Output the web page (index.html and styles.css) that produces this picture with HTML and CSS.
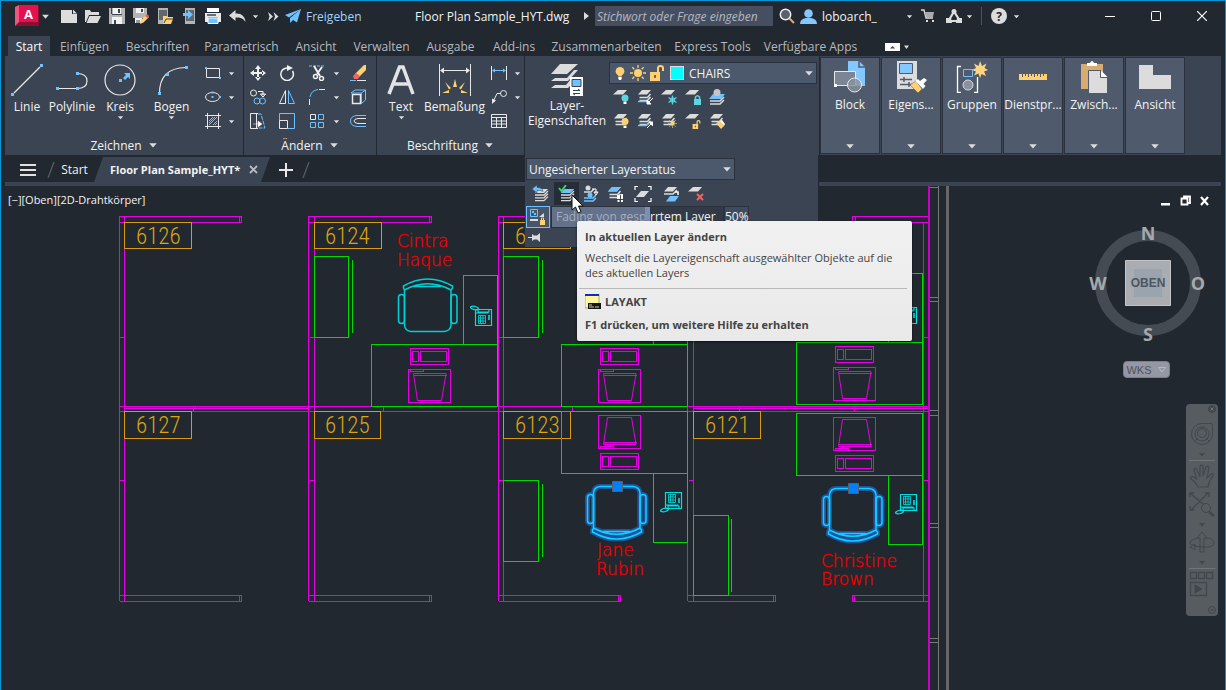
FILE: index.html
```html
<!DOCTYPE html>
<html lang="de">
<head>
<meta charset="utf-8">
<title>Floor Plan Sample_HYT.dwg</title>
<link rel="stylesheet" href="styles.css">
</head>
<body>
<svg class="defs" width="0" height="0" aria-hidden="true">
  <symbol id="down" viewBox="0 0 8 8"><path d="M1 2.500h6l-3 3.500z" fill="#dcdcdc"/></symbol>
  <symbol id="sheets" viewBox="0 0 16 16"><path d="M5 1h9l-4 4.500H1z" fill="#dcdcdc"/><path d="M2.500 8.500h8L13.500 5M2.500 11.500h8L13.500 8" fill="none" stroke="#dcdcdc" stroke-width="1.500"/></symbol>
  <symbol id="sheet" viewBox="0 0 16 16"><path d="M5 1h9l-4 4.500H0z" fill="#dcdcdc"/></symbol>
  <symbol id="stack" viewBox="0 0 16 16"><path d="M6 3h9l-4 4H2z" fill="#dcdcdc"/><path d="M2 9h9l4-4M2 11.800h9l4-4M2 14.600h9l4-4" fill="none" stroke="#dcdcdc" stroke-width="1.300"/></symbol>
  <symbol id="bulb" viewBox="0 0 16 16"><circle cx="8" cy="6" r="5"/><path d="M6 9h4v3H6z"/><path d="M6 12.500h4v2L9 16H7l-1-1.500z" fill="#fff"/></symbol>
  <symbol id="sun" viewBox="0 0 16 16"><circle cx="8" cy="8" r="4" fill="#ffd06f"/><path d="M8 0v3M8 13v3M0 8h3M13 8h3M2.300 2.300l2 2M11.700 11.700l2 2M13.700 2.300l-2 2M4.300 11.700l-2 2" stroke="#ffd06f" stroke-width="1.300"/></symbol>
  <symbol id="unlock" viewBox="0 0 16 16"><path d="M1 7h10v9H1z" fill="#ffd06f"/><path d="M9 8V3q0-2 2.500-2T14 3v3" fill="none" stroke="#ffd06f" stroke-width="2"/><path d="M6 10v3" stroke="#3b4453" stroke-width="1.500"/></symbol>

  <g id="kit" fill="none">
    <g stroke="#00d900" shape-rendering="crispEdges">
      <path d="M371.500 344.500H497.500V406.500H371.500zM463.500 344.500V275.500H497.500V344.500"/>
    </g>
    <g stroke="#e600e6">
      <path shape-rendering="crispEdges" d="M410.500 348.500H448.500V364.500H410.500zM412.500 351.500H418.500V361.500H412.500zM420.500 351.500H446.500V361.500H420.500zM408.500 369.500H450.500V402.500H408.500zM410.500 369.500V371.500H423.500V369.500M413.500 375.500H446.500"/>
      <path d="M413.500 373.500H446L441.500 400.500H417.500z"/>
    </g>
    <g stroke="#00dfe2">
      <path d="M470.500 307q2-1.500 5-.500 3 1 3 2.500-2 1.500-5 .500-3-1-3-2.500z" stroke-width="1.300"/>
      <path d="M475.500 309.500h16v16h-16zM475.500 313h13M478 309v3h11v-3" stroke-width="1.200"/>
      <path d="M478.500 315.500h7v8h-7zM480.500 315.500v8M483 315.500v8M478.500 318h7M478.500 321h7" stroke-width=".8"/>
      <path d="M489 315v5" stroke-width="1.600"/>
    </g>
  </g>
  <g id="chair" fill="none">
    <path d="M404.500 290V325Q405 331 411 331.500H444Q450.500 331 451 325V290M404.500 290L403.500 288V286Q427.500 272 452.500 286V288L451 290M404.500 290Q427.500 277.500 451 290M414 286.500H441"/>
    <rect x="398.500" y="294.500" width="6" height="29" rx="3"/>
    <rect x="451" y="294.500" width="6" height="29" rx="3"/>
  </g>
</svg>

<div class="app">
  <header class="titlebar">
    <button class="logo" aria-label="Anwendungsmenü"><svg width="24" height="23" viewBox="0 0 24 23"><path d="M4 1h20v20H0V3z" fill="#8b0f2e"/><path d="M0 2l4-2v17l-4 4z" fill="#f0577f"/><path d="M4 0h19v17H4z" fill="#e51050"/><text x="13.500" y="14" text-anchor="middle" class="logo-letter">A</text></svg><svg class="dn" width="9" height="9"><use href="#down"/></svg></button>
    <div class="quick">
      <button aria-label="Neu"><svg width="16" height="16"><path d="M0 2h11v4h5v9H0z" fill="#dcdcdc"/><path d="M12 1.500L16 5.500h-4z" fill="#dcdcdc"/></svg></button>
      <button aria-label="Öffnen"><svg width="16" height="16"><path d="M0 2h5l1 2h8v3H4L1 14H0z" fill="#dcdcdc"/><path d="M4.500 8H16l-3.500 7H1.500z" fill="#dcdcdc"/></svg></button>
      <button aria-label="Speichern"><svg width="16" height="16"><path d="M0 0h16v16H0z" fill="#b4b4b4"/><path d="M4 0h8v6H4zM3 9h10v7H3z" fill="#f2f2f2"/><path d="M9 1h2v4H9zM5 12h2v4H5z" fill="#3b4453"/><path d="M3 6.500h10M2.500 0v6" stroke="#3b4453"/></svg></button>
      <button aria-label="Speichern unter"><svg width="16" height="16"><path d="M0 0h14v10H0z" fill="#b4b4b4"/><path d="M3 0h8v5H3z" fill="#f2f2f2"/><path d="M8 1h2v3H8z" fill="#3b4453"/><path d="M2 10h7v5H2z" fill="#f2f2f2"/><path d="M4 12v3M6 12v3" stroke="#3b4453"/><path d="M7 16l1-4 5-5 3 2-5.500 5.500z" fill="#ffd06f"/><path d="M12 8l2-2 2 2-1.500 2z" fill="#ed5a5a"/></svg></button>
      <button aria-label="Aus Web und Mobile öffnen"><svg width="16" height="16"><path d="M1 0h10v16H1z" fill="#b4b4b4"/><path d="M2 2h8v10H2z" fill="#62676d"/><path d="M6 8h4l1 1h5v2l-2 5H6z" fill="#ffd06f"/><path d="M7 15l2-4h7" stroke="#3b4453" fill="none"/></svg></button>
      <button aria-label="In Web und Mobile speichern"><svg width="16" height="16"><path d="M4 0h10v16H4z" fill="#b4b4b4"/><path d="M5 2h8v11H5z" fill="#62676d"/><path d="M2 5h5V2l5 4.500L7 11V8H2z" fill="#6fc1ff"/></svg></button>
      <button aria-label="Plotten"><svg width="18" height="16"><path d="M3 0h12v4H3z" fill="#fff"/><path d="M1 5h16v9H1z" fill="#e8e8e8"/><path d="M3 7h9M4 10h10" stroke="#3b4453" stroke-width="1.500"/><path d="M4 10h10v5.500H4z" fill="#6fc1ff" stroke="#fff"/></svg></button>
      <button aria-label="Rückgängig"><svg width="17" height="14"><path d="M0 6.500L6.500 1v3.500C12 4 16 7 16.500 13 14 9 11 8.500 6.500 8.500V12z" fill="#dcdcdc"/></svg></button>
      <button class="narrow" aria-label="Verlauf"><svg width="7" height="7"><use href="#down"/></svg></button>
      <button class="narrow" aria-label="Mehr"><svg width="11" height="9"><path d="M0 0l5 4.500L0 9l1.500-4.500zM5.500 0l5 4.500-5 4.500L7 4.500z" fill="#dcdcdc"/></svg></button>
      <button class="share"><svg width="16" height="16"><path d="M16 1L0 7l4 2.500zM16 1L5 10v5l3-3 4 2.500z" fill="#6fc1ff"/></svg>Freigeben</button>
    </div>
    <div class="doc-title">Floor Plan Sample_HYT.dwg</div>
    <svg class="play" width="5" height="8"><path d="M0 0l5 4-5 4z" fill="#dcdcdc"/></svg>
    <input class="search" type="text" aria-label="Suche" placeholder="Stichwort oder Frage eingeben">
    <button class="ico22" aria-label="Suchen"><svg width="16" height="16"><circle cx="6.500" cy="6.500" r="5.200" fill="#59616c" stroke="#f0f0f0" stroke-width="1.500"/><path d="M10.500 10.500L15 15" stroke="#d8ab7a" stroke-width="2"/></svg></button>
    <button class="user"><svg width="17" height="15"><circle cx="8.500" cy="4.500" r="4.300" fill="#84c8ff"/><path d="M0 15q0-5 6-6h5q6 1 6 6z" fill="#84c8ff"/></svg><span>loboarch_</span><svg width="7" height="7"><use href="#down"/></svg></button>
    <button class="ico22" aria-label="App Store"><svg width="14" height="14"><path d="M0 1h3l2 8h7" fill="none" stroke="#dcdcdc" stroke-width="1.300"/><path d="M4 3h9l-1 5H5z" fill="#a8abaf"/><path d="M5 11h2v2H5zM11 11h2v2h-2z" fill="#dcdcdc"/></svg></button>
    <button class="ico36" aria-label="Autodesk"><svg width="16" height="14"><path d="M8 2.500L2.500 12H14z" fill="none" stroke="#dcdcdc" stroke-width="2.200"/><circle cx="8" cy="2.500" r="2.500" fill="#dcdcdc"/><path d="M0 9h5l1 5H0zM11 9h5v5h-6z" fill="#dcdcdc"/></svg><svg width="7" height="7"><use href="#down"/></svg></button>
    <button class="help" aria-label="Hilfe"><svg width="16" height="16"><circle cx="8" cy="8" r="8" fill="#dcdcdc"/><text x="8" y="12.500" text-anchor="middle" class="q">?</text></svg><svg width="7" height="7"><use href="#down"/></svg></button>
    <div class="win">
      <button aria-label="Minimieren"><svg width="10" height="10"><path d="M0 5.500h10" stroke="#fff"/></svg></button>
      <button aria-label="Maximieren"><svg width="10" height="10"><rect x=".5" y=".5" width="9" height="9" rx="1" fill="none" stroke="#fff"/></svg></button>
      <button aria-label="Schließen"><svg width="10" height="10"><path d="M0 0l10 10M10 0L0 10" stroke="#fff" stroke-width="1.200"/></svg></button>
    </div>
  </header>

  <nav class="tabs">
    <button class="on">Start</button><button>Einfügen</button><button>Beschriften</button><button>Parametrisch</button><button>Ansicht</button><button>Verwalten</button><button>Ausgabe</button><button>Add-ins</button><button>Zusammenarbeiten</button><button>Express Tools</button><button>Verfügbare Apps</button>
    <button class="fold" aria-label="Multifunktionsleiste minimieren"><svg width="24" height="9"><path d="M0 1h15v8H0z" fill="#fff"/><path d="M5 6.500h5L7.500 4z" fill="#444"/><path d="M19 3.500h5L21.500 7z" fill="#dcdcdc"/></svg></button>
  </nav>

  <div class="ribbon">
    <section class="panel">
      <div class="body draw">
        <button class="big"><svg width="32" height="32"><path d="M3 29L29 3" stroke="#e8e8e8" stroke-width="1.200"/><path d="M0 29h3v3H0zM29 0h3v3h-3z" fill="#6fc1ff"/></svg>Linie</button>
        <button class="big"><svg width="32" height="32"><path d="M1 24.500h20M21 9.500q10 0 10 7.500t-10 7.500" fill="none" stroke="#e8e8e8" stroke-width="1.200"/><path d="M0 23h3v3H0zM20 23h3v3h-3zM20 8h3v3h-3z" fill="#6fc1ff"/></svg>Polylinie</button>
        <button class="big"><svg width="32" height="32"><circle cx="16" cy="16" r="15" fill="none" stroke="#e8e8e8" stroke-width="1.200"/><path d="M15 15h3v3h-3zM19 14l3-3-2-2h6v6l-2-2-3 3z" fill="#6fc1ff"/></svg>Kreis<svg width="7" height="7"><use href="#down"/></svg></button>
        <button class="big"><svg width="32" height="32"><path d="M3.500 30Q3 4 30 3.500" fill="none" stroke="#e8e8e8" stroke-width="1.200"/><path d="M2 28h3v3H2zM10 9h3v3h-3zM29 2h3v3h-3z" fill="#6fc1ff"/></svg>Bogen<svg width="7" height="7"><use href="#down"/></svg></button>
        <div class="mini two">
          <button aria-label="Rechteck"><svg width="16" height="16"><path d="M1.500 3.500h13v9h-13z" fill="none" stroke="#e8e8e8"/><path d="M0 2h2v2H0zM14 12h2v2h-2z" fill="#6fc1ff"/></svg></button><button aria-label="Rechteck Optionen"><svg width="7" height="7"><use href="#down"/></svg></button>
          <button aria-label="Ellipse"><svg width="16" height="16"><ellipse cx="7.500" cy="8" rx="7" ry="4.500" fill="none" stroke="#e8e8e8"/><path d="M6.500 7h2v2h-2zM6.500 2.500h2v2h-2zM14 7h2v2h-2z" fill="#6fc1ff"/></svg></button><button aria-label="Ellipse Optionen"><svg width="7" height="7"><use href="#down"/></svg></button>
          <button aria-label="Schraffur"><svg width="16" height="16"><path d="M2.500 0v16M13.500 0v16M0 2.500h16M0 13.500h16" stroke="#e8e8e8"/><path d="M4 8l4-4M4 12l8-8M8 12l4-4M10 12l2-2M4 10l6-6" stroke="#6fc1ff"/></svg></button><button aria-label="Schraffur Optionen"><svg width="7" height="7"><use href="#down"/></svg></button>
        </div>
      </div>
      <button class="title">Zeichnen<svg width="10" height="10"><use href="#down"/></svg></button>
    </section>

    <section class="panel">
      <div class="body mini modify">
        <button aria-label="Schieben"><svg width="16" height="16"><path d="M7 3h2v4h4v2H9v4H7V9H3V7h4zM8 0l3 4H5zM8 16l3-4H5zM0 8l4-3v6zM16 8l-4-3v6z" fill="#f0f0f0"/></svg></button>
        <button aria-label="Drehen"><svg width="16" height="16"><path d="M9 3A6.300 6.300 0 1 0 13.500 6" fill="none" stroke="#f0f0f0" stroke-width="1.500"/><path d="M8 0l6 3-6 3z" fill="#f0f0f0"/></svg></button>
        <button aria-label="Stutzen"><svg width="16" height="16"><path d="M0 1h16" stroke="#6fc1ff" stroke-dasharray="3 1"/><path d="M5 1l6 10M13 2L8 9" stroke="#f0f0f0" stroke-width="2"/><circle cx="6.500" cy="11.500" r="2" fill="none" stroke="#f0f0f0" stroke-width="1.500"/><circle cx="12.500" cy="13.500" r="2" fill="none" stroke="#f0f0f0" stroke-width="1.500"/></svg></button>
        <button aria-label="Stutzen Optionen"><svg width="7" height="7"><use href="#down"/></svg></button>
        <button aria-label="Löschen"><svg width="16" height="16"><path d="M5 9l9-9h2v5l-7 7z" fill="#ffd06f"/><path d="M3 11l3-3 4 3-2 3H4z" fill="#f16464"/><path d="M0 15.500h6" stroke="#6fc1ff"/><path d="M7 15.500h9" stroke="#e8e8e8"/></svg></button>
        <button aria-label="Kopieren"><svg width="16" height="16"><circle cx="3.500" cy="4" r="3" fill="none" stroke="#e8e8e8"/><path d="M8 2.500h5V6M10.500 5h5L13 8z" fill="none" stroke="#fff"/><circle cx="7" cy="12" r="3" fill="none" stroke="#6fc1ff"/><circle cx="12.500" cy="12" r="3" fill="none" stroke="#6fc1ff"/></svg></button>
        <button aria-label="Spiegeln"><svg width="16" height="16"><path d="M6.500 1.500v13h-6z" fill="none" stroke="#e8e8e8"/><path d="M9.500 1.500v13h6z" fill="none" stroke="#6fc1ff"/></svg></button>
        <button aria-label="Abrunden"><svg width="16" height="16"><path d="M1 8Q2 1.500 9 .500" fill="none" stroke="#6fc1ff"/><path d="M.500 10v6M10 .500h6" stroke="#e8e8e8"/></svg></button>
        <button aria-label="Abrunden Optionen"><svg width="7" height="7"><use href="#down"/></svg></button>
        <button aria-label="Ursprung"><svg width="16" height="16"><path d="M2.500 5.500h8v9h-8z" fill="none" stroke="#e8e8e8" stroke-width="1.500"/><path d="M1 4l4-3h10.500v10L12 14M1 4h10.500v11M11.500 4l4-3" fill="none" stroke="#6fc1ff"/></svg></button>
        <button aria-label="Strecken"><svg width="16" height="16"><path d="M8 .500H.500v15H8M6.500 1v14" fill="none" stroke="#e8e8e8"/><path d="M8 1h3l4 14H7" fill="none" stroke="#6fc1ff" stroke-dasharray="4 1"/><path d="M3 11h5V8l4 3-4 3v-3" fill="#fff" stroke="#fff" stroke-width=".5"/></svg></button>
        <button aria-label="Varia"><svg width="16" height="16"><path d="M.500 8V.500h15v15H9" fill="none" stroke="#6fc1ff"/><path d="M.500 7.500h8v8h-8z" fill="none" stroke="#e8e8e8"/></svg></button>
        <button aria-label="Reihe"><svg width="16" height="16"><path d="M1.500 1.500h5v5h-5z" fill="none" stroke="#e8e8e8"/><path d="M9.500 1.500h5v5h-5zM1.500 9.500h5v5h-5zM9.500 9.500h5v5h-5z" fill="none" stroke="#6fc1ff"/></svg></button>
        <button aria-label="Reihe Optionen"><svg width="7" height="7"><use href="#down"/></svg></button>
        <button aria-label="Versetzen"><svg width="16" height="16"><path d="M16 2.500H7Q.500 3 .500 8T7 13.500h9" fill="none" stroke="#6fc1ff"/><path d="M16 5.500H8Q4 6 4 8t4 2.500h8" fill="none" stroke="#e8e8e8"/></svg></button>
      </div>
      <button class="title">Ändern<svg width="10" height="10"><use href="#down"/></svg></button>
    </section>

    <section class="panel">
      <div class="body anno">
        <button class="big"><svg width="32" height="32"><path d="M4 30L14.500 3h3.500L28 30M8 20h16" fill="none" stroke="#e4e4e4" stroke-width="3.500"/></svg>Text<svg width="7" height="7"><use href="#down"/></svg></button>
        <button class="big"><svg width="32" height="32"><path d="M.500 0v32M31.500 0v32M3 6.500h26" stroke="#e8e8e8"/><path d="M1 6.500l4-3v6zM31 6.500l-4-3v6z" fill="#e8e8e8"/><path d="M16 15l2 8h-4zM6 18l6 6-2 1.500zM26 18l-6 6 2 1.500zM3 29l7-3v3zM29 29l-7-3v3z" fill="#ffd06f"/></svg>Bemaßung</button>
        <div class="mini dims">
          <button aria-label="Linear"><svg width="16" height="16"><path d="M.500 1v14M15.500 1v14" stroke="#e8e8e8"/><path d="M2 5.500h12" stroke="#6fc1ff"/><path d="M1 5.500L4 3.500v4zM15 5.500L12 3.500v4z" fill="#6fc1ff"/></svg></button><button aria-label="Linear Optionen"><svg width="7" height="7"><use href="#down"/></svg></button>
          <button aria-label="Führung"><svg width="16" height="16"><path d="M2 13L6 4.500h4" fill="none" stroke="#e8e8e8"/><circle cx="12.500" cy="4.500" r="3" fill="none" stroke="#e8e8e8"/><path d="M1 15V9.500l4 2z" fill="#e8e8e8"/></svg></button><button aria-label="Führung Optionen"><svg width="7" height="7"><use href="#down"/></svg></button>
          <button aria-label="Tabelle"><svg width="16" height="16"><path d="M.500 1.500h15v13H.500zM0 4.500h16M0 8h16M0 11h16M5.500 5v9M10.500 5v9" fill="none" stroke="#e8e8e8"/></svg></button>
        </div>
      </div>
      <button class="title">Beschriftung<svg width="10" height="10"><use href="#down"/></svg></button>
    </section>

    <section class="panel layers">
      <div class="body">
        <button class="big props"><svg width="34" height="34"><path d="M10 0h18L17 10H1zM5 14l-4 3h17l10-11h-4l-7 8zM5 21l-4 3h17l3-3v-6l-5 6z" fill="#dcdcdc"/><path d="M20 13h13v19H20z" fill="#fff"/><path d="M22 15.500h9v7h-9z" fill="#6fc1ff" stroke="#3b4453"/><path d="M23 26.500h7M23 29.500h7M28 25l2 1.500M25 31l-2-1.500" stroke="#3b4453"/></svg>Layer-<br>Eigenschaften</button>
        <div class="layer-tools">
          <button class="combo current"><svg width="14" height="16" fill="#ffd06f"><use href="#bulb"/></svg><svg width="16" height="16"><use href="#sun"/></svg><svg width="16" height="16"><use href="#unlock"/></svg><i class="swatch"></i><span>CHAIRS</span><svg class="end" width="10" height="10"><use href="#down"/></svg></button>
          <div class="mini five">
            <button aria-label="Layer aus"><svg width="16" height="16"><use href="#sheet" y="0"/><circle cx="12" cy="9" r="3.500" fill="#5ad5e2"/><path d="M10.500 12.500h3V15h-3z" fill="#fff"/></svg></button>
            <button aria-label="Layer isolieren"><svg width="16" height="16"><use href="#sheets"/><path d="M1 12.500h8l2-2" stroke="#6fc1ff" fill="none" stroke-width="1.500"/><path d="M16 9l-4 4m-2-2v4h4z" stroke="#fff" fill="#fff"/></svg></button>
            <button aria-label="Layer frieren"><svg width="16" height="16"><use href="#sheet"/><circle cx="11.500" cy="11" r="2.300" fill="none" stroke="#5ad5e2"/><path d="M11.500 6.500v9M7.500 8.500l8 5M15.500 8.500l-8 5" stroke="#5ad5e2" stroke-width="1.300"/></svg></button>
            <button aria-label="Layer sperren"><svg width="16" height="16"><use href="#sheet"/><path d="M9 10h7v6H9z" fill="#5ad5e2"/><path d="M10.500 10V8q2-2.500 4 0v2" fill="none" stroke="#5ad5e2" stroke-width="1.500"/></svg></button>
            <button aria-label="Aktuell machen"><svg width="16" height="16"><path d="M4 5h12l-4 5H0z" fill="#6fc1ff"/><path d="M1 12h10l4-4M1 15h10l4-4" stroke="#dcdcdc" fill="none" stroke-width="1.500"/><circle cx="8" cy="3.500" r="3.500" fill="#c6c6c6"/></svg></button>
            <button aria-label="Alle Layer ein"><svg width="16" height="16"><use href="#sheets"/><circle cx="12" cy="8.500" r="3.500" fill="#ffd06f"/><path d="M10.500 12.500h3V15h-3z" fill="#fff"/></svg></button>
            <button aria-label="Isolierung aufheben"><svg width="16" height="16"><use href="#sheets"/><path d="M1 12.500h8l2-2" stroke="#6fc1ff" fill="none" stroke-width="1.500"/><path d="M10 15l4-4m-2-2h4v4z" stroke="#fff" fill="#fff"/></svg></button>
            <button aria-label="Alle Layer tauen"><svg width="16" height="16"><use href="#sheets"/><use href="#sun" x="7" y="6" width="9" height="9"/></svg></button>
            <button aria-label="Layer entsperren"><svg width="16" height="16"><use href="#sheet"/><use href="#unlock" x="7" y="7" width="9" height="9"/></svg></button>
            <button aria-label="Layer anpassen"><svg width="16" height="16"><use href="#sheets"/><path d="M7 10l4-2 4 5-3 3z" fill="#ffd06f"/><path d="M11 8l2-1 3 4-1 2z" fill="#fff"/></svg></button>
          </div>
        </div>
      </div>
      <div class="flyout">
        <button class="combo state"><span>Ungesicherter Layerstatus</span><svg class="end" width="10" height="10"><use href="#down"/></svg></button>
        <div class="fly-tools">
          <button aria-label="Layer vorher"><svg width="17" height="17"><use href="#stack" x="1" y="1" width="16" height="16"/><path d="M0 4l5-4v2.500q6 0 6 4Q9 5 5 5.500V8z" fill="#6fc1ff" stroke="#3b4453" stroke-width=".5"/></svg></button>
          <button class="hot" aria-label="In aktuellen Layer ändern"><svg width="17" height="17"><use href="#stack" x="1" y="1" width="16" height="16"/><path d="M7 4h9l-4 4H3z" fill="#6fc1ff"/><path d="M1 3l2.500 3L8 0" fill="none" stroke="#3ddc73" stroke-width="1.800"/></svg></button>
          <button aria-label="In neuen Layer kopieren"><svg width="16" height="17"><path d="M1 7h7l3-3" stroke="#dcdcdc" stroke-width="1.500" fill="none"/><circle cx="5" cy="3" r="2.500" fill="#dcdcdc"/><path d="M9 4h4v4M11 7h4l-2 3z" stroke="#fff" fill="none"/><circle cx="7" cy="10" r="2.500" fill="#6fc1ff"/><path d="M1 13h9l3-3M1 16h9l3-3" stroke="#6fc1ff" fill="none" stroke-width="1.500"/></svg></button>
          <button aria-label="Layer durchlaufen"><svg width="16" height="16"><use href="#sheets"/><path d="M5 1h9l-4 4.500H1z" fill="#6fc1ff"/><path d="M10 9h3v4h-3zM14 8h2v5h-2zM10.500 14h2v2h-2zM14 14h2v2h-2z" fill="#fff"/></svg></button>
          <button aria-label="In AF isolieren"><svg width="18" height="16"><path d="M1 4V.500h3M14 .500h3V4M1 12v3.500h3M14 15.500h3V12" fill="none" stroke="#fff" stroke-width="1.200"/><path d="M7 5h8l-5 6H2z" fill="#dcdcdc"/></svg></button>
          <button aria-label="Zusammenführen"><svg width="17" height="16"><path d="M5 1h9l-4 4.500H1z" fill="#dcdcdc"/><path d="M1 8h9l4-4" stroke="#dcdcdc" fill="none" stroke-width="1.500"/><path d="M7 10h9l-4 5.500H3z" fill="#6fc1ff"/><path d="M12 6h3v3" stroke="#fff" fill="none" stroke-width="1.500"/></svg></button>
          <button aria-label="Layer löschen"><svg width="16" height="16"><use href="#sheet"/><path d="M9 8l6 6M15 8l-6 6" stroke="#f06464" stroke-width="2"/></svg></button>
        </div>
        <div class="fade">
          <button class="lockfade" aria-label="Fading gesperrter Layer"><svg width="18" height="18"><path d="M1.500 1.500h7v7h-7z" fill="none" stroke="#6fc1ff"/><path d="M3 3h2v2H3zM5 5h2v2H5z" fill="#6fc1ff"/><path d="M10 9l5-4v4zM1 11h8v2H1z" fill="#dcdcdc"/><path d="M11 12h5v5h-5z" fill="#ffd06f"/><path d="M12.500 12v-2h2v2" stroke="#ffd06f" fill="none"/></svg></button>
          <div class="slider"><span class="fill">Fading von gesp</span><span class="rest">rrtem Layer</span></div>
          <output>50%</output>
        </div>
        <button class="pin" aria-label="Anheften"><svg width="13" height="9"><path d="M0 4.500h5" stroke="#dcdcdc"/><path d="M4 1l2 1.500h3L12 0v9L9 6.500H6L4 8z" fill="#dcdcdc"/></svg></button>
        <div class="tooltip" role="tooltip">
          <strong>In aktuellen Layer ändern</strong>
          <p>Wechselt die Layereigenschaft ausgewählter Objekte auf die des aktuellen Layers</p>
          <hr>
          <div class="cmd"><svg width="16" height="16"><path d="M0 0h14v14H0z" fill="#fff79c" stroke="#a9a96a"/><path d="M0 0h14v2H0z" fill="#1a2bb0"/><path d="M3 9h13v6H3z" fill="#161616"/><path d="M4 11h3M4 13h5M10 13h4" stroke="#ccc"/></svg><strong>LAYAKT</strong></div>
          <strong>F1 drücken, um weitere Hilfe zu erhalten</strong>
        </div>
        <svg class="cursor" width="13" height="20"><path d="M1 1v15l3.500-3 2.500 6 3-1.200L7.500 12H12z" fill="#fff" stroke="#111"/></svg>
      </div>
    </section>

    <div class="folded">
      <button><svg width="32" height="32"><path d="M14 0h11l6 6v19H14z" fill="#84c8ff"/><path d="M25 0v6h6" fill="none" stroke="#4f5b6d" stroke-width="1.500"/><path d="M.500 10.500h21v14h-21z" fill="#7b8594" stroke="#e8e8e8"/><circle cx="20.500" cy="24" r="7" fill="#8a929e" fill-opacity=".8" stroke="#e8e8e8"/><path d="M0 23h3v3H0z" fill="#fff"/></svg>Block<svg class="dn" width="10" height="10"><use href="#down"/></svg></button>
      <button><svg width="32" height="32"><path d="M2 0h20v28H2z" fill="#dcdcdc"/><path d="M4.500 2.500h13v10h-13z" fill="#84c8ff" stroke="#4f5b6d"/><path d="M5 18.500h12M5 23.500h12M9 16v5M14 21v5" stroke="#4f5b6d" stroke-width="1.500"/><path d="M15 24l6-4 6 8-4 4z" fill="#ffd06f" stroke="#4f5b6d" stroke-width=".5"/><path d="M20.500 20l2.500-2 2 2 4-3 3 2-3.500 4 2 2-2.500 3z" fill="#fff"/></svg>Eigens...<svg class="dn" width="10" height="10"><use href="#down"/></svg></button>
      <button><svg width="32" height="32"><path d="M5 5.500H1.500v26H5M18 31.500h3.500V16" fill="none" stroke="#fff" stroke-width="1.300"/><path d="M7.500 8.500h9v7h-9z" fill="none" stroke="#6fc1ff"/><circle cx="12" cy="24" r="5" fill="#8a929e" stroke="#dcdcdc"/><path d="M24 0l2 5 4.500-2.500L28.500 7 32 9l-4 1.500 2 4.500-4.500-2L24 17l-1.500-4.500-4.500 2 2-4L16 9l4-2-2-4.500L22.500 5z" fill="#ffd580"/></svg>Gruppen<svg class="dn" width="10" height="10"><use href="#down"/></svg></button>
      <button><svg width="32" height="32"><path d="M2 13h28v6H2z" fill="#ffd06f"/><path d="M5.500 13v3M8.500 13v2M11.500 13v3M14.500 13v2M17.500 13v3M20.500 13v2M23.500 13v3M26.500 13v2" stroke="#4f5b6d"/></svg>Dienstpr...<svg class="dn" width="10" height="10"><use href="#down"/></svg></button>
      <button><svg width="32" height="32"><path d="M3 3h22v25H3z" fill="#d8ab70"/><path d="M9 2h3q2-4 4 0h3v3H9z" fill="#fff"/><path d="M10.500 9.500h12l7 7v16h-19z" fill="#dcdcdc" stroke="#4f5b6d"/><path d="M22.500 9v7.500H30" fill="#fff" stroke="#4f5b6d"/></svg>Zwisch...<svg class="dn" width="10" height="10"><use href="#down"/></svg></button>
      <button><svg width="32" height="32"><path d="M0 4h14v10h18v14H0z" fill="#dcdcdc"/></svg>Ansicht<svg class="dn" width="10" height="10"><use href="#down"/></svg></button>
    </div>
  </div>

  <div class="docs">
    <button class="burger" aria-label="Menü"><svg width="16" height="12"><path d="M0 1h16M0 6h16M0 11h16" stroke="#e0e0e0" stroke-width="2"/></svg></button>
    <svg class="slash" width="8" height="16"><path d="M1 16L7 0" stroke="#555c66" stroke-width="1.300"/></svg>
    <button class="doc">Start</button>
    <button class="doc active"><span>Floor Plan Sample_HYT*</span><svg width="9" height="9"><path d="M1 1l7 7M8 1L1 8" stroke="#b9bdc3" stroke-width="1.800"/></svg></button>
    <button class="add" aria-label="Neue Zeichnung"><svg width="14" height="14"><path d="M7 0v14M0 7h14" stroke="#e8e8e8" stroke-width="2"/></svg></button>
    <svg class="slash" width="8" height="16"><path d="M1 16L7 0" stroke="#555c66" stroke-width="1.300"/></svg>
  </div>

  <main class="canvas">
    <svg class="plan" viewBox="1 186 1224 504" preserveAspectRatio="xMinYMin slice" role="img" aria-label="Grundriss">
      <g fill="none" shape-rendering="crispEdges">
        <path stroke="#777" d="M938.500 186V690M929 187.500H938M929 297.500H938M929 301.500H938M929 410.500H938M929 415.500H938M929 523.500H938M929 527.500H938M929 638.500H938M929 642.500H938"/>
        <path stroke="#666" stroke-width="3" d="M947.500 186V690"/>
        <path stroke="#e600e6" d="M119.500 601V216.500H241.500V222.500H119.500M239.500 216V222M124.500 216V601M308.500 601V216.500H431.500V222.500H308.500M429.500 216V222M314.500 216V601M498.500 601V216.500H621.500V222.500H498.500M503.500 216V601M687.500 601V216.500M693.500 216V601M928.500 216.500H852.500V222.500H928.500M855.500 216V222M923.500 222V601
          M119.500 595.500H241.500V601.500H119.500M239.500 595V601M308.500 595.500H431.500V601.500H308.500M429.500 595V601M498.500 595.500H620.500V601.500H498.500M618.500 595V601M687.500 595.500H775.500V601.500H687.500M773.500 595V601M928.500 595.500H852.500V601.500H928.500M854.500 595V601
          M119.500 337.500H125M309.500 337.500H314M498.500 337.500H503M923.500 337.500H928M119.500 480.500H125M309.500 480.500H314M498.500 480.500H503M688.500 480.500H693M923.500 480.500H928
          M119.500 406.500H928M119.500 411.500H928M125.500 408.500H308M693.500 408.500H928M193.500 406V411M383.500 406V411M572.500 406V411M739.500 406V411M854.500 406V411"/>
        <path stroke="#c800c8" stroke-width="2" d="M929 186V690"/>
        <path stroke="#00d900" d="M314.500 256.500H348.500V337.500H314.500zM352.500 260V333M503.500 256.500H538.500V337.500H503.500zM542.500 260V333M503.500 480.500H538.500V561.500H503.500zM542.500 484V557M693.500 515.500H728.500V595.500H693.500zM731.500 519V592"/>
        <path stroke="#d99a12" d="M124.500 222.500H191.500V248.500H124.500zM314.500 222.500H381.500V248.500H314.500zM503.500 222.500H570.500V248.500H503.500zM124.500 411.500H191.500V438.500H124.500zM314.500 411.500H380.500V438.500H314.500zM503.500 411.500H570.500V438.500H503.500zM693.500 411.500H760.500V438.500H693.500z"/>
      </g>
      <use href="#kit"/>
      <use href="#kit" x="190"/>
      <use href="#kit" x="425" y="-2"/>
      <use href="#kit" transform="translate(190 818) scale(1 -1)"/>
      <use href="#kit" transform="translate(425 820) scale(1 -1)"/>
      <use href="#chair" class="chair"/>
      <g transform="translate(189 818) scale(1 -1)"><use href="#chair" class="halo"/><use href="#chair" class="picked"/></g>
      <g transform="translate(425 820) scale(1 -1)"><use href="#chair" class="halo"/><use href="#chair" class="picked"/></g>
      <path d="M612.500 481.500h10v10h-10zM848.500 483.500h10v10h-10z" fill="#007fff" stroke="#5a6068"/>
      <g class="rooms">
        <text x="136" y="244">6126</text><text x="325" y="244">6124</text><text x="515" y="244">6122</text>
        <text x="136" y="433">6127</text><text x="325" y="433">6125</text><text x="515" y="433">6123</text><text x="705" y="433">6121</text>
      </g>
      <g class="names">
        <text x="397" y="247">Cintra</text><text x="397" y="266">Haque</text>
        <text x="597" y="556">Jane</text><text x="596" y="575">Rubin</text>
        <text x="821" y="567">Christine</text><text x="821" y="585">Brown</text>
      </g>
    </svg>
    <div class="view-label">[−][Oben][2D-Drahtkörper]</div>
    <div class="view-win"><svg width="50" height="12"><path d="M1 8h9v2.500H1z" fill="#fff"/><path d="M21.500 3.500h6v6h-6zM24 3V1.500h6V8h-2" fill="none" stroke="#fff" stroke-width="1.800"/><path d="M41 2l7 8M48 2l-7 8" stroke="#fff" stroke-width="2.200"/></svg></div>
    <div class="cube"><svg width="130" height="142" viewBox="-4 -10 130 142"><circle cx="61" cy="61" r="47.500" fill="none" stroke="#454b53" stroke-width="11"/><path d="M38.500 38.500h45v45h-45z" fill="#a9acb0" stroke="#c3c4c5"/><path d="M47 47h28v28H47z" fill="#9aa4ae"/><g text-anchor="middle"><text class="face" x="61" y="65">OBEN</text><g class="wind"><text x="61" y="18">N</text><text x="61" y="119">S</text><text x="11" y="68">W</text><text x="111" y="68">O</text></g></g></svg></div>
    <button class="wks">WKS<svg width="9" height="6"><path d="M.500.500h7L4 5z" fill="none" stroke="#b8b9c4"/></svg></button>
    <div class="navbar"><svg width="32" height="212" fill="none" stroke="#42474e"><circle cx="26" cy="5" r="3.500" fill="#42474e"/><path d="M24.500 3.500l3 3m0-3l-3 3" stroke="#70757a"/><path d="M16 19.500h9q1.500 0 1.500 1.500v9A10.500 10.500 0 1 1 16 19.500z"/><circle cx="16" cy="30" r="7"/><circle cx="16" cy="29" r="4.500"/><path d="M8 38l4-4M24 38l-4-4"/><path d="M13 49h6l-3 3.500zM13 119h6l-3 3.500zM13 157h6l-3 3.500z" fill="#42474e" stroke="none"/><path d="M3 56.500h26M3 164.500h26" stroke="#70757a"/><path d="M12 83q-3-6-7-8-2-2 1-2.500 3 .500 5 3l-3-9q0-3 2.500-1.500L14 73V62q1.500-2.500 3 0v10l3-9q2-2 3 .500L21 74l4-4q3-1 2 1.500-4 5-5 11.500z" stroke-width="1.200"/><path d="M5 90l18 15M22 89L5 106M4 93v-4h4M19 89h4v4M4 102v4h4" stroke-width="1.300"/><circle cx="20" cy="104" r="4.500" fill="#575c61"/><path d="M23 108l5 4" stroke-width="2.500"/><path d="M14 148v-14h-3l5-6 5 6h-3v14zM12 134q-8 2-8 5t12 4 12-4-8-5M4 143l5-3v6z"/><path d="M4.500 168.500h6v6h-6zM12.500 168.500h6v6h-6zM20.500 168.500h6v6h-6zM4.500 178.500h16v13h-16z" stroke-width="1.300"/><path d="M9 181l7 4-7 4z" fill="#42474e"/><circle cx="26" cy="206" r="3.500"/><path d="M24 206h4"/></svg></div>
  </main>
</div>
</body>
</html>
```
FILE: styles.css
```css
* { box-sizing: border-box; }
body { margin: 0; background: #222830; color: #f2f2f2; font: 12px/15px "Open Sans", "Noto Sans", sans-serif; }
button { display: flex; align-items: center; justify-content: center; margin: 0; padding: 0; border: 0; background: none; color: inherit; font: inherit; white-space: nowrap; }
svg { display: block; flex: none; }
.defs { position: absolute; }
.app { display: flex; flex-direction: column; min-height: 100vh; border: 1px solid #0696d7; border-bottom: 0; }

.titlebar { display: flex; align-items: center; height: 30px; margin-bottom: 5px; padding-left: 14px; }
.logo { gap: 2px; width: 36px; justify-content: flex-start; }
.logo-letter { font: 700 13px/1 "Open Sans", sans-serif; fill: #fff; }
.quick { display: flex; align-items: center; width: 358px; padding-left: 6px; }
.quick button { width: 24px; height: 24px; }
.quick .narrow { width: 12px; }
.quick .narrow + .narrow { width: 24px; }
.quick .share { width: auto; gap: 5px; color: #9dd4ff; }
.doc-title { width: 175px; padding-left: 6px; white-space: nowrap; }
.play { margin-right: 6px; }
.search { width: 178px; height: 20px; padding: 0 2px; border: 0; background: #464f61; color: #fff; font: italic 12px "Open Sans", sans-serif; }
.search::placeholder { color: #b4b9c1; opacity: 1; }
.ico22 { width: 27px; }
.user { gap: 5px; width: 113px; justify-content: flex-start; }
.user span { flex: 1; text-align: left; }
.user + .ico22 { width: 30px; }
.ico36 { gap: 4px; width: 33px; }
.help { gap: 6px; width: 48px; height: 18px; margin-left: 5px; border-left: 1px solid #4b535f; }
.q { font: 700 12px "Open Sans", sans-serif; fill: #222830; }
.win { display: flex; flex: 1; justify-content: flex-end; }
.win button { width: 46px; height: 28px; }

.tabs { display: grid; grid-template-columns: 42px 69px 77px 91px 58px 73px 65px 62px 123px 89px 107px 46px; height: 20px; padding-left: 7px; color: #b5b9be; }
.tabs .on { background: #3b4453; color: #fff; }
.tabs .fold { padding-left: 21px; justify-content: flex-start; }

.ribbon { display: flex; height: 99px; margin: 0 4px; background: #3b4453; }
.panel { position: relative; flex: none; border-right: 1px solid #222830; }
.body { display: flex; height: 80px; padding-top: 5px; }
.title { gap: 6px; width: 100%; height: 18px; }
.big { flex-direction: column; justify-content: flex-start; align-items: center; padding-top: 3px; gap: 3px; height: 75px; }
.big svg + svg { margin-top: -3px; }
.draw { display: grid; grid-template-columns: 44px 46px 50px 53px 45px; }
.mini { display: grid; grid-auto-rows: 24px; }
.two { grid-template-columns: 30px 6px; }
.modify { grid-template-columns: 28px 30px 30px 8px 36px; }
.anno { display: grid; grid-template-columns: 48px 59px 30px 10px; }
.dims { grid-template-columns: 30px 6px; }
.layers { width: 295px; }
.layers .body { display: grid; grid-template-columns: 84px 1fr; }
.props { gap: 0; padding-top: 3px; }
.combo { height: 22px; border: 1px solid #2b323d; background: #4c586b; text-align: left; }
.combo .end { margin-left: auto; margin-right: 2px; }
.current { gap: 3px; width: 208px; padding-left: 3px; margin: 1px 0; }
.swatch { width: 14px; height: 14px; margin: 0 2px; background: #0ff; border: 1px solid #e0e0e0; }
.five { grid-template-columns: repeat(5, 24px); }
.flyout { position: absolute; z-index: 2; top: 99px; left: 0; right: 0; height: 92px; padding: 3px 1px; background: #3b4453; border-right: 1px solid #222830; }
.state { width: 209px; padding-left: 2px; }
.fly-tools { display: grid; grid-template-columns: 28px 25px 24px 24px 31px 26px 24px; height: 23px; margin: 2px 0 1px; }
.fly-tools .hot { background: #272d36; }
.fade { display: flex; height: 22px; }
.lockfade { width: 24px; border: 1px solid #6fc1ff; background: #47566b; margin-right: 1px; }
.slider { display: flex; width: 173px; border: 1px solid #2b323d; background: #323a47; line-height: 19px; white-space: nowrap; }
.fill { flex: none; width: 98px; padding-left: 4px; background: #63718a; border-right: 5px solid #7e90b2; overflow: hidden; color: #a3adbf; }
.fade output { width: 25px; border: 1px solid #2b323d; background: #3f4b60; line-height: 19px; text-align: center; }
.pin { width: 16px; height: 18px; }
.tooltip { position: absolute; top: 66px; left: 52px; width: 335px; padding: 8px 5px 8px 8px; background: linear-gradient(#f1f1f1, #e9e9e9); border-radius: 2px; color: #444; font-size: 11px; box-shadow: 0 1px 3px #0008; }
.tooltip strong { display: block; line-height: 16px; color: #444; }
.tooltip p { margin: 5px 0 8px; }
.tooltip hr { margin: 0 0 5px -6px; border: 0; border-top: 1px solid #b8b8b8; }
.cmd { display: flex; align-items: center; gap: 4px; margin-bottom: 7px; }
.cursor { position: absolute; left: 46px; top: 39px; }

.folded { display: flex; gap: 1px; padding: 1px 0 1px; }
.folded button { flex-direction: column; justify-content: flex-start; gap: 4px; width: 60px; height: 97px; padding-top: 3px; border: 1px solid #2b323d; background: #4f5b6d; }
.folded .dn { margin: auto 0 2px; }

.docs { display: flex; align-items: flex-end; height: 31px; margin: 0 4px; padding-left: 15px; border-bottom: 4px solid #3b4453; }
.docs > * { height: 25px; }
.docs .slash { height: 16px; margin-bottom: 4px; }
.burger { width: 16px; margin-right: 11px; }
.doc { width: 39px; }
.docs .active { justify-content: flex-start; gap: 9px; width: 176px; padding-left: 16px; background: #3b4453; font-weight: 700; font-size: 11px; clip-path: polygon(9px 0, 100% 0, calc(100% - 9px) 100%, 0 100%); }
.add { width: 32px; }

.canvas { position: relative; flex: 1; min-height: 440px; overflow: hidden; }
.plan { position: absolute; inset: 0; width: 100%; height: 100%; }
.chair { stroke: #00cfd6; stroke-width: 1.5; }
.halo { stroke: #1b6bd8; stroke-width: 5; opacity: .65; }
.picked { stroke: #10d0ff; stroke-width: 1.5; }
.rooms { font: 300 23px "Roboto Condensed", "Liberation Sans Narrow", sans-serif; fill: #dca40c; }
.names { font: 200 17px "DejaVu Sans Light", "DejaVu Sans ExtraLight", "DejaVu Sans", sans-serif; fill: #f00000; stroke: #e60000; stroke-width: .4; }
.view-label { position: relative; padding: 6px 7px; font-size: 11px; }
.view-win { position: absolute; top: 9px; right: 15px; }
.cube { position: absolute; top: 26px; right: 12px; }
.face { font: 700 12px "Liberation Sans", sans-serif; fill: #4d5661; }
.wind { font: 700 18px "Open Sans", sans-serif; fill: #a5a9ad; }
.wks { position: absolute; top: 175px; right: 55px; gap: 6px; width: 47px; height: 17px; border: 1px solid #7b7e8c; border-radius: 4px; background: #9697a5; color: #50535c; font: 11px "Liberation Sans", sans-serif; }
.navbar { position: absolute; top: 218px; right: 7px; border-radius: 4px; background: #575c61; }
```
